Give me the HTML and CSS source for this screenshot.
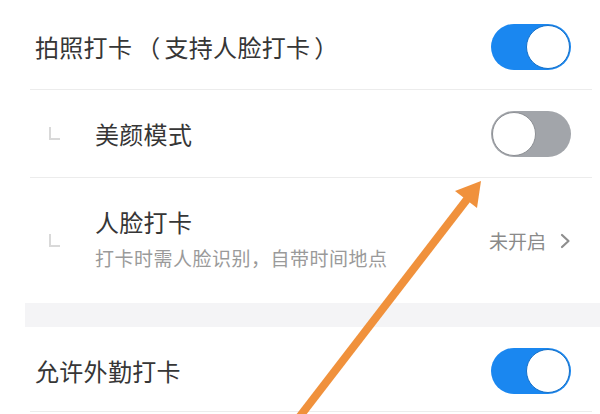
FILE: index.html
```html
<!DOCTYPE html>
<html lang="zh-CN">

<head>
    <meta charset="UTF-8">
    <meta name="viewport" content="width=device-width, initial-scale=1.0">
    <title>打卡设置</title>
    <link rel="stylesheet" href="styles.css">
</head>

<body>
    <div class="page">
        <div class="cell cell_top">
            <span class="cell_title">拍照打卡<span class="paren">（</span>支持人脸打卡<span class="paren">）</span></span>
            <span class="switch on"><span class="knob"></span></span>
        </div>

        <div class="cell cell_sub">
            <span class="corner"></span>
            <span class="cell_title">美颜模式</span>
            <span class="switch"><span class="knob"></span></span>
        </div>

        <div class="cell cell_sub cell_tall">
            <span class="corner"></span>
            <div class="cell_text">
                <span class="cell_title">人脸打卡</span>
                <span class="cell_desc">打卡时需人脸识别，自带时间地点</span>
            </div>
            <span class="cell_value">未开启
                <svg class="chevron" width="11" height="16" viewBox="0 0 11 16">
                    <path d="M2 2 L8.5 8 L2 14" fill="none" stroke="#8e8e8e" stroke-width="2.2" stroke-linecap="round" stroke-linejoin="round" />
                </svg>
            </span>
        </div>

        <div class="gap_band"></div>

        <div class="cell cell_last">
            <span class="cell_title">允许外勤打卡</span>
            <span class="switch on"><span class="knob"></span></span>
        </div>
    </div>

    <!-- annotation arrow drawn over the screenshot -->
    <svg class="arrow" width="600" height="414" viewBox="0 0 600 414">
        <line x1="294" y1="424" x2="468" y2="198" stroke="#f0913c" stroke-width="8" />
        <polygon points="481,181 477,208 455,191" fill="#f0913c" />
    </svg>
</body>

</html>
```

FILE: styles.css
```css
html, body {margin: 0; padding: 0; background: #fff;}

body{
    width: 600px;
    height: 414px;
    overflow: hidden;
    position: relative;
    font-family: "Noto Sans CJK SC", "Noto Sans", sans-serif;
    color: #363636;
}

.page{padding-left: 25px;}

.cell{
    display: flex;
    align-items: center;
    box-sizing: border-box;
    margin: 0 8px 0 5px;
    padding: 0 21px 0 5px;
    border-bottom: 1px solid #ececec;
}
.cell_top{height: 90px; padding-top: 5px;}
.cell_sub{height: 88px;}
.cell_tall{height: 125px; border-bottom: none;}
.cell_last{height: 85px; padding-top: 4px;}

.cell_title{font-size: 24px; line-height: 30px; letter-spacing: 0.3px; flex: 1;}
.paren{margin: 0 4px;}

.corner{
    width: 9px;
    height: 11px;
    margin: 0 35px 0 14px;
    border-left: 2px solid #d9d9d9;
    border-bottom: 2px solid #d9d9d9;
}

.cell_text{display: flex; flex-direction: column; flex: 1; padding-bottom: 4px;}
.cell_text .cell_title{flex: none;}
.cell_desc{font-size: 19px; line-height: 26px; letter-spacing: 0.5px; color: #9a9a9a; margin-top: 8px;}

.cell_value{display: flex; align-items: center; gap: 14px; font-size: 19px; color: #8a8a8a;}

.gap_band{height: 24px; background: #f4f4f6;}

/* switches */
.switch{
    width: 80px;
    height: 46px;
    border-radius: 23px;
    background: #a2a5aa;
    display: flex;
    align-items: center;
    padding: 1px;
    box-sizing: border-box;
}
.switch .knob{
    width: 44px;
    height: 44px;
    border-radius: 50%;
    background: #fff;
    box-sizing: border-box;
    border: 1px solid #8c8f94;
}
.switch.on{background: #1a87f0; justify-content: flex-end;}
.switch.on .knob{border-color: #1570c8;}

.arrow{position: absolute; left: 0; top: 0; pointer-events: none;}
```
